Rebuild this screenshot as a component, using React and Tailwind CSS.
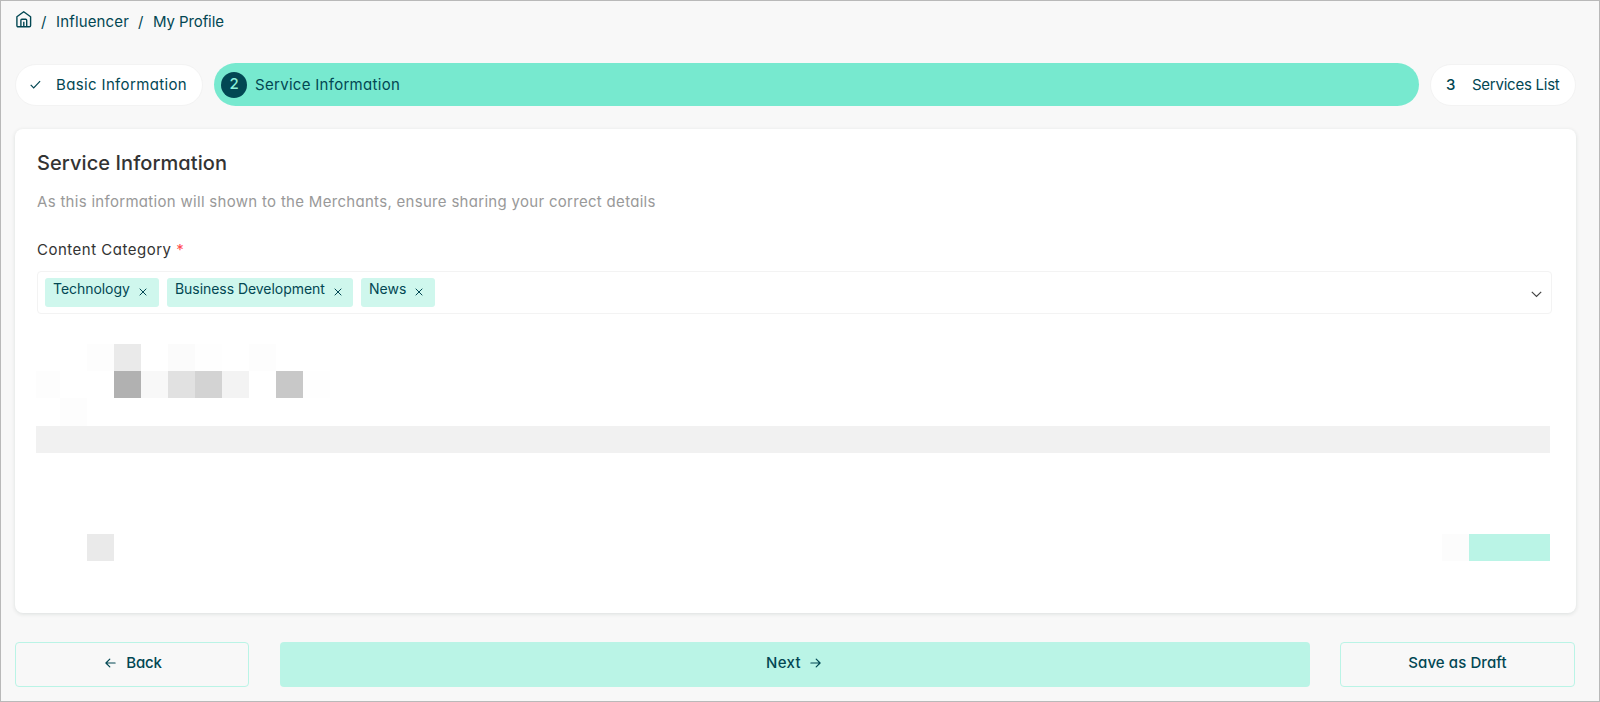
import React from "react";

const tags = [
  { label: "Technology", box: "w-[114px]", text: "w-[76px] tracking-[-0.05px]" },
  { label: "Business Development", box: "w-[186px]", text: "w-[149px] tracking-[-0.05px]" },
  { label: "News", box: "w-[74px]", text: "w-[36px]" },
];

function HomeIcon() {
  return (
    <svg width="16" height="17" viewBox="0 0 16 17" fill="none" stroke="currentColor" strokeWidth="1.4" strokeLinejoin="round">
      <path d="M.9 5.8 7.7.8l6.9 5v8.8c0 .7-.5 1.2-1.2 1.2H2.1c-.7 0-1.2-.5-1.2-1.2Z" />
      <path d="M4.9 15.8V9.2c0-.6.4-1 1-1h3.8c.6 0 1 .4 1 1v6.6M7.8 10.8v5" />
    </svg>
  );
}

function CloseIcon() {
  return (
    <svg width="8" height="8" viewBox="0 0 8 8" fill="none" stroke="currentColor" strokeWidth="1">
      <path d="m.7.7 6.6 6.6M7.3.7.7 7.3" />
    </svg>
  );
}

function ArrowIcon({ className }) {
  return (
    <svg className={className} width="11" height="10" viewBox="0 0 11 10" fill="none" stroke="currentColor" strokeWidth="1.2" strokeLinecap="round" strokeLinejoin="round">
      <path d="M.9 5h9.2M6.2 1.1 10.1 5 6.2 8.9" />
    </svg>
  );
}

function Breadcrumb() {
  return (
    <nav className="flex h-[41px] items-center pl-[15px] text-[15px]">
      <span className="mt-[-4px] w-[25px]">
        <HomeIcon />
      </span>
      <span className="mt-px w-[15px]">/</span>
      <span className="mt-px w-[82px] tracking-[0.15px]">Influencer</span>
      <span className="mt-px w-[15px]">/</span>
      <span className="mt-px tracking-[-0.1px]">My Profile</span>
    </nav>
  );
}

function Steps() {
  return (
    <div className="mt-[21px] flex h-[43px] items-center gap-[11px] pl-[14px] text-[15px]">
      <div className="flex h-[42px] w-[188px] items-center rounded-full border border-[#f3f3f3] bg-white pl-[14px]">
        <svg className="mr-[15px]" width="11" height="9" viewBox="0 0 11 9" fill="none" stroke="currentColor" strokeWidth="1.2">
          <path d="m.7 4.8 3 3L10.1 1.2" />
        </svg>
        <span className="pt-px tracking-[0.36px]">Basic Information</span>
      </div>
      <div className="flex h-[43px] w-[1205px] items-center rounded-full bg-[#77e9cf] pl-[7px]">
        <span className="mr-2 flex size-[26px] items-center justify-center rounded-full bg-[#024753] font-medium text-[#8cf0da]">2</span>
        <span className="pt-px tracking-[0.3px]">Service Information</span>
      </div>
      <div className="flex h-[42px] w-[146px] items-center rounded-full border border-[#f3f3f3] bg-white pl-[15px]">
        <span className="w-[26px] pt-px font-medium">3</span>
        <span className="pt-px tracking-[-0.25px]">Services List</span>
      </div>
    </div>
  );
}

function CategorySelect() {
  return (
    <div className="mt-[9px] flex h-[43px] w-[1515px] items-start rounded border border-[#f3f3f3] pt-[6px] pl-[7px]">
      <div className="flex gap-2 text-[14px]">
        {tags.map((tag) => (
          <div key={tag.label} className={`flex h-[29px] items-start rounded-[3px] bg-[#cff7ed] pl-2 text-[#024753] ${tag.box}`}>
            <span className={`mr-[10px] whitespace-nowrap leading-[22px] ${tag.text}`}>{tag.label}</span>
            <span className="mt-[10px]">
              <CloseIcon />
            </span>
          </div>
        ))}
      </div>
      <svg className="mt-[13px] mr-[9px] ml-auto" width="11" height="7" viewBox="0 0 11 7" fill="none" stroke="#444" strokeWidth="1.2">
        <path d="m.8.8 4.7 4.7L10.2.8" />
      </svg>
    </div>
  );
}

// Obscured fields under the category select
function HiddenFields() {
  return (
    <div className="mt-[30px] ml-[-1px] w-[1514px]">
      <div className="flex h-[27px]">
        <div className="ml-[51px] w-[27px] bg-[#fdfdfd]" />
        <div className="w-[27px] bg-[#eaeaea]" />
        <div className="ml-[27px] w-[27px] bg-[#fbfbfb]" />
        <div className="w-[27px] bg-[#fefefe]" />
        <div className="ml-[27px] w-[27px] bg-[#fdfdfd]" />
      </div>
      <div className="flex h-[27px]">
        <div className="w-6 bg-[#fdfdfd]" />
        <div className="ml-[54px] w-[27px] bg-[#b1b1b1]" />
        <div className="w-[27px] bg-[#f8f8f8]" />
        <div className="w-[27px] bg-[#e1e1e1]" />
        <div className="w-[27px] bg-[#d3d3d3]" />
        <div className="w-[27px] bg-[#f3f3f3]" />
        <div className="ml-[27px] w-[27px] bg-[#c8c8c8]" />
        <div className="w-[27px] bg-[#fefefe]" />
      </div>
      <div className="ml-6 h-[28px] w-[27px] bg-[#fdfdfd]" />
      <div className="h-[27px] bg-[#f1f1f1]" />
      <div className="mt-[81px] flex h-[27px]">
        <div className="ml-[51px] w-[27px] bg-[#eaeaea]" />
        <div className="ml-auto w-[27px] bg-[#fcfcfc]" />
        <div className="w-[81px] bg-[#baf4e6]" />
      </div>
    </div>
  );
}

export default function App() {
  return (
    <div className="h-[702px] w-[1600px] overflow-hidden border border-[#b9b9b9] bg-[#f8f8f8] font-['Inter',sans-serif] text-[#024753] [font-feature-settings:'cv11']">
      <Breadcrumb />
      <Steps />

      <main className="mt-[23px] ml-[14px] h-[484px] w-[1561px] rounded-lg bg-white pl-[22px] shadow-[0_1px_4px_rgba(0,40,30,0.12)]">
        <h1 className="pt-[20px] text-[20px] leading-[28px] font-medium tracking-[0.08px] text-[#333]">Service Information</h1>
        <p className="mt-[13px] text-[15px] leading-[24px] tracking-[0.3px] text-[#999]">
          As this information will shown to the Merchants, ensure sharing your correct details
        </p>
        <div className="mt-[24px] text-[15px] leading-[24px] tracking-[0.5px] text-[#333]">
          Content Category <span className="text-[#ff4d4f]">*</span>
        </div>
        <CategorySelect />
        <HiddenFields />
      </main>

      <footer className="mt-[29px] ml-[14px] flex h-[45px] text-[15px] font-medium">
        <button className="flex w-[234px] items-center justify-center gap-[10px] rounded border border-[#baf4e6] pb-[3px] pl-[3px]">
          <ArrowIcon className="rotate-180" />
          <span className="tracking-[-0.2px]">Back</span>
        </button>
        <button className="ml-[31px] flex w-[1030px] items-center justify-center gap-[9px] rounded bg-[#baf4e6] pr-[3px] pb-[3px]">
          <span className="tracking-[0.3px]">Next</span>
          <ArrowIcon />
        </button>
        <button className="ml-[30px] w-[235px] rounded border border-[#baf4e6] pb-[3px] tracking-[0.08px]">Save as Draft</button>
      </footer>
    </div>
  );
}
